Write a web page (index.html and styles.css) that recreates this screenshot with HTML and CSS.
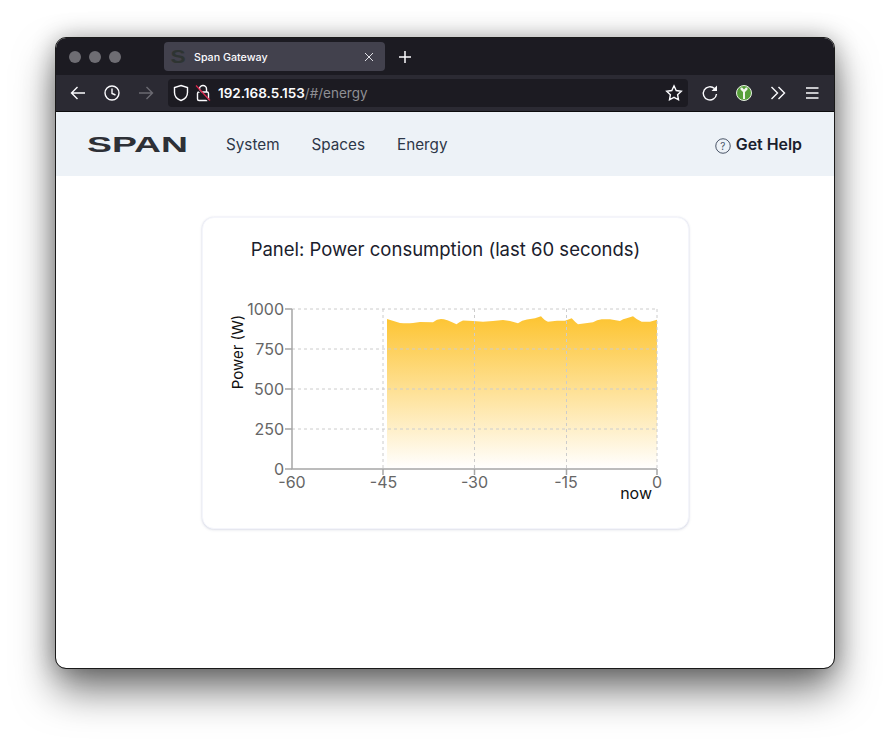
FILE: index.html
```html
<!DOCTYPE html>
<html lang="en">
<head>
<meta charset="UTF-8">
<meta name="viewport" content="width=device-width, initial-scale=1.0">
<title>Span Gateway</title>
<link rel="stylesheet" href="styles.css">
</head>
<body>
<div class="window">
    <div class="tabbar">
        <div class="lights"><span></span><span></span><span></span></div>
        <div class="tab">
            <span class="tab-favicon">S</span>
            <span class="tab-title">Span Gateway</span>
            <svg class="tab-close" width="10" height="10" viewBox="0 0 10 10"><path d="M1 1l8 8M9 1l-8 8"/></svg>
        </div>
        <svg class="new-tab" width="14" height="14" viewBox="0 0 14 14"><path d="M7 1v12M1 7h12"/></svg>
    </div>

    <div class="toolbar">
        <svg class="tool" width="18" height="18" viewBox="0 0 18 18"><path d="M16 9H2.500M8.500 3L2.500 9l6 6"/></svg>
        <svg class="tool" width="18" height="18" viewBox="0 0 18 18"><circle cx="9" cy="9" r="7"/><path d="M9 4.500V9.500l3.500 1.500"/></svg>
        <svg class="tool dim" width="18" height="18" viewBox="0 0 18 18"><path d="M2 9h13.500M9.500 3l6 6-6 6"/></svg>
        <div class="urlbar">
            <svg class="tool" width="16" height="18" viewBox="0 0 16 18"><path d="M8 1.500l6.500 2v5c0 4-3 6.800-6.500 8-3.500-1.200-6.500-4-6.500-8v-5z"/></svg>
            <svg class="lock" width="16" height="18" viewBox="0 0 16 18"><rect x="2.500" y="8" width="11" height="8.500" rx="1.500"/><path d="M4.500 8V5a3.500 3.500 0 017 0v3"/><path class="lock-gap" d="M0 2.500l14 15"/><path class="lock-slash" d="M1 1.500l14 15"/></svg>
            <div class="url"><b>192.168.5.153</b>/#/energy</div>
            <svg class="tool star" width="18" height="18" viewBox="0 0 18 18"><path d="M9 1.800l2.200 4.700 5.100.7-3.700 3.500.9 5.100L9 13.400l-4.500 2.400.9-5.100-3.700-3.500 5.100-.7z"/></svg>
        </div>
        <div class="tools-right">
            <svg class="tool" width="18" height="18" viewBox="0 0 18 18"><path d="M15.500 10a6.600 6.600 0 11-2-5.400"/><path class="solid" d="M16 1.500v5.500h-5.500z"/></svg>
            <svg class="addon" width="18" height="18" viewBox="0 0 18 18"><circle cx="9" cy="9" r="7.500"/><path class="addon-key" d="M5.500 3.500h1.700L9 5.500l1.800-2h1.700v2L10 8v7H8V8L5.500 5.500z"/></svg>
            <svg class="tool" width="18" height="18" viewBox="0 0 18 18"><path d="M2.500 3l6 6-6 6M9.500 3l6 6-6 6"/></svg>
            <svg class="tool" width="18" height="18" viewBox="0 0 18 18"><path d="M3 4h12.500M3 9h12.500M3 14h12.500"/></svg>
        </div>
    </div>

    <nav class="navbar">
        <svg class="logo" width="100" height="18" viewBox="0 0 100 18"><text x="0" y="16.500" textLength="101" lengthAdjust="spacingAndGlyphs">SPAN</text></svg>
        <a class="nav-link">System</a>
        <a class="nav-link">Spaces</a>
        <a class="nav-link">Energy</a>
        <a class="help">
            <svg width="16" height="16" viewBox="0 0 16 16"><circle cx="8" cy="8" r="7.250"/></svg>
            <span class="help-mark">?</span>
            Get Help
        </a>
    </nav>

    <main class="content">
        <section class="card">
            <h2>Panel: Power consumption (last 60 seconds)</h2>
            <svg class="chart" width="485" height="238" viewBox="203 290 485 238">
                <defs>
                    <linearGradient id="fade" x1="0" y1="0" x2="0" y2="1">
                        <stop offset="0" stop-color="#fdc431"/>
                        <stop offset="1" stop-color="#ffffff"/>
                    </linearGradient>
                </defs>
                <path fill="url(#fade)" d="M387 319 L400 323 Q407 323.500 413 323 L420 322 L433 322.300 Q437 319 441 319 Q446 319 456.500 324.300 Q459 322 463 320.500 L473 321 L483 321.700 L493 321 L503 320 L510 321 L518 323.300 Q522 320 527 319.500 L535 318.300 L541 316.300 Q545 321 548 321.700 L557 320.700 L565 320.700 L571.700 318.300 Q575 322 578 324.300 L593 322.300 Q597 320 601.700 319.300 L610 319.300 L620 321 Q623 319 626.700 318.300 L633 316.300 Q637 320 641.700 321.700 L650 321.700 L657 319.700 V469 H387 Z"/>
                <g class="grid">
                    <path d="M292 309H657M292 349H657M292 389H657M292 429H657"/>
                    <path d="M383 309V469M474.500 309V469M566.500 309V469M657 309V469"/>
                </g>
                <g class="axis">
                    <path d="M292 309V469H657"/>
                    <path d="M285 309H292M285 349H292M285 389H292M285 429H292M285 469H292"/>
                    <path d="M383 469V475M474.500 469V475M566.500 469V475M657 469V475"/>
                </g>
                <g class="ticks-y">
                    <text x="284" y="315">1000</text>
                    <text x="284" y="355">750</text>
                    <text x="284" y="395">500</text>
                    <text x="284" y="435">250</text>
                    <text x="284" y="475">0</text>
                </g>
                <g class="ticks-x">
                    <text x="292" y="488">-60</text>
                    <text x="383.500" y="488">-45</text>
                    <text x="474.500" y="488">-30</text>
                    <text x="566" y="488">-15</text>
                    <text x="657" y="488">0</text>
                </g>
                <text class="axis-title" transform="translate(243 352) rotate(-90)">Power (W)</text>
                <text class="axis-now" x="652" y="499">now</text>
            </svg>
        </section>
    </main>
</div>
</body>
</html>
```

FILE: styles.css
```css
html, body {
    margin: 0;
    height: 742px;
    overflow: hidden;
}
body {
    background-color: #fff;
    font-family: Inter, "Liberation Sans", sans-serif;
    color: #1a202c;
    padding: 38px 56px 0;
    box-sizing: border-box;
}
.window {
    width: 778px;
    height: 630px;
    display: flex;
    flex-direction: column;
    overflow: hidden;
    border-radius: 10px;
    outline: 1px solid #1a1a1a;
    background-color: #fff;
    box-shadow: 0 22px 40px rgba(0, 0, 0, 0.55), 0 0 24px rgba(0, 0, 0, 0.3);
}

.tabbar {
    height: 37px;
    flex: none;
    display: flex;
    align-items: center;
    background-color: #1c1b22;
}
.lights {
    display: flex;
    gap: 8px;
    margin-left: 13px;
    width: 95px;
}
.lights span {
    width: 12px;
    height: 12px;
    border-radius: 50%;
    background-color: #6e6d73;
}
.tab {
    width: 221px;
    height: 29px;
    box-sizing: border-box;
    padding: 0 11px 0 8px;
    display: flex;
    align-items: center;
    border-radius: 4px;
    background-color: #42414d;
    color: #fbfbfe;
    font-size: 10.700px;
    font-weight: 500;
}
.tab-favicon {
    width: 14px;
    margin-right: 8px;
    color: #2e3432;
    font-family: "Liberation Sans", sans-serif;
    font-size: 19px;
    font-weight: 700;
    transform: scaleX(1.2);
}
.tab-title {
    flex: 1;
    padding-top: 1px;
}
.tab-close {
    fill: none;
    stroke: #e0e0e6;
    stroke-width: 1;
}
.new-tab {
    margin-left: 13px;
    fill: none;
    stroke: #fbfbfe;
    stroke-width: 1.5;
}

.toolbar {
    height: 37px;
    flex: none;
    display: flex;
    align-items: center;
    gap: 16px;
    padding: 0 13px;
    box-sizing: border-box;
    background-color: #2b2a33;
    border-bottom: 1px solid #0c0c0d;
}
.tool {
    flex: none;
    fill: none;
    stroke: #fbfbfe;
    stroke-width: 1.4;
}
.tool .solid {
    fill: #fbfbfe;
    stroke: none;
}
.tool.dim {
    stroke: #6b6a72;
}
.urlbar {
    width: 520px;
    height: 28px;
    margin-left: -3px;
    margin-right: -3px;
    padding: 0 5px;
    box-sizing: border-box;
    display: flex;
    align-items: center;
    border-radius: 4px;
    background-color: #1c1b22;
}
.urlbar .tool:first-child {
    margin-right: 6px;
}
.lock {
    flex: none;
    fill: none;
    stroke: #fbfbfe;
    stroke-width: 1.4;
}
.lock .lock-gap {
    stroke: #1c1b22;
}
.lock .lock-slash {
    stroke: #e22850;
    stroke-width: 1.2;
}
.url {
    flex: 1;
    margin-left: 7px;
    color: #8f8f94;
    font-size: 13.500px;
}
.url b {
    color: #fbfbfe;
    font-weight: 600;
}
.tools-right {
    display: flex;
    align-items: center;
    gap: 16px;
    margin-left: auto;
}
.addon circle {
    fill: #57a03a;
    stroke: #e8f0e4;
    stroke-width: 1;
}
.addon .addon-key {
    fill: #f2f6ee;
}

.navbar {
    height: 64px;
    flex: none;
    display: flex;
    align-items: center;
    padding: 0 32px 0 31px;
    background-color: #edf2f7;
}
.logo {
    margin-right: 39px;
    overflow: visible;
}
.logo text {
    font-family: "Liberation Sans", sans-serif;
    font-size: 22px;
    font-weight: 700;
    fill: #2d3036;
}
.nav-link {
    margin-right: 32px;
    color: #2d3748;
    font-size: 15.250px;
}
.help {
    margin-left: auto;
    position: relative;
    display: flex;
    align-items: center;
    gap: 5px;
    color: #1a202c;
    font-size: 15.900px;
    font-weight: 600;
}
.help svg {
    margin-top: 3px;
    fill: none;
    stroke: #4a5568;
    stroke-width: 1;
}
.help-mark {
    position: absolute;
    left: 0;
    top: 5px;
    width: 16px;
    text-align: center;
    color: #4a5568;
    font-size: 10px;
    font-weight: 400;
}

.content {
    flex: 1;
    display: flex;
    justify-content: center;
    align-items: flex-start;
    padding: 41px 0 0 1px;
}
.card {
    width: 487px;
    height: 312px;
    box-sizing: border-box;
    border: 1px solid #f4f5fb;
    border-radius: 12px;
    box-shadow: 0 0 2px rgba(120, 130, 190, 0.2), 0 1px 3px rgba(100, 110, 140, 0.18);
    background-color: #fff;
}
.card h2 {
    margin: 0;
    height: 72px;
    padding-top: 19px;
    box-sizing: border-box;
    text-align: center;
    color: #1a202c;
    font-size: 18.500px;
    font-weight: 400;
    line-height: 24px;
}
.chart {
    display: block;
}
.chart text {
    font-family: Inter, "Liberation Sans", sans-serif;
    font-size: 16px;
}
.grid path {
    fill: none;
    stroke: #cccccc;
    stroke-dasharray: 3 3;
}
.axis path {
    fill: none;
    stroke: #a6a6a6;
    stroke-width: 1.5;
}
.ticks-y text {
    fill: #666666;
    text-anchor: end;
}
.ticks-x text {
    fill: #666666;
    text-anchor: middle;
}
.axis-title {
    fill: #111111;
    text-anchor: middle;
}
.chart .axis-title {
    font-size: 15px;
}
.axis-now {
    fill: #111111;
    text-anchor: end;
}
```
